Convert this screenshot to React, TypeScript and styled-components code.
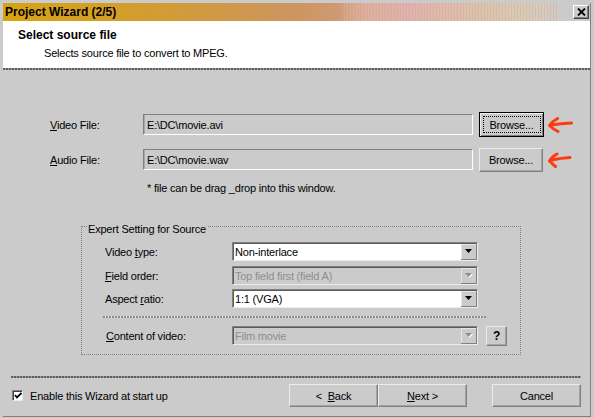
import React from "react";
import styled, { createGlobalStyle } from "styled-components";

const GlobalStyle = createGlobalStyle`
  html, body {
    margin: 0;
    padding: 0;
    background: #cbcbcb;
  }
  body {
    font-family: "Liberation Sans", Arial, sans-serif;
    font-size: 11px;
    letter-spacing: -0.2px;
    color: #000;
  }
`;

const Frame = styled.div`
  width: 587px;
  height: 413px;
  margin: 3px 0 0 3px;
  border-right: 1px solid #808080;
  border-bottom: 1px solid #808080;
  display: flex;
  flex-direction: column;
  background: #cbcbcb;
`;

const TitleBar = styled.div`
  height: 18px;
  display: flex;
  align-items: center;
  justify-content: space-between;
  padding: 0 1px 0 2px;
  background:
    repeating-linear-gradient(90deg, rgba(236, 150, 176, 0.45) 0 1px, rgba(214, 214, 140, 0.25) 1px 2px, transparent 2px 3px)
      340px 0 / 215px 100% no-repeat,
    linear-gradient(
      90deg,
      #d6a312 0%,
      #d29d30 25%,
      #cc9560 50%,
      #cf9a72 57%,
      #d9ae9a 62%,
      #dcb3ae 70%,
      #d8c2a8 79%,
      #d3cdb4 87%,
      #cfcfc0 92%,
      #cbcbcb 95%,
      #cbcbcb 100%
    );
`;

const TitleText = styled.span`
  font-weight: bold;
  font-size: 12px;
  letter-spacing: 0;
`;

const CloseButton = styled.div`
  width: 16px;
  height: 14px;
  box-sizing: border-box;
  display: flex;
  align-items: center;
  justify-content: center;
  background: #cbcbcb;
  border: 1px solid;
  border-color: #fff #404040 #404040 #fff;
  box-shadow: inset -1px -1px #808080;
`;

const Header = styled.div`
  height: 47px;
  background: #fff;
  padding: 7px 0 0 15px;
  box-sizing: border-box;
`;

const HeaderTitle = styled.div`
  font-weight: bold;
  font-size: 12px;
  letter-spacing: 0;
  line-height: 14px;
`;

const HeaderSub = styled.div`
  margin: 4px 0 0 26px;
  line-height: 14px;
`;

const DotLine = styled.div<{ $width?: number }>`
  height: 2px;
  flex-shrink: 0;
  width: ${(p) => (p.$width ? `${p.$width}px` : "auto")};
  background: repeating-linear-gradient(90deg, #5e5e5e 0 2px, #9c9c9c 2px 3px);
`;

const Body = styled.div`
  flex: 1;
  padding-top: 42px;
`;

const FileRow = styled.div`
  display: flex;
  align-items: center;
  height: 25px;
  margin-bottom: 10px;
`;

const FileLabel = styled.label`
  width: 93px;
  padding-left: 47px;
`;

const Key = styled.span`
  text-decoration: underline;
`;

const PathField = styled.div`
  width: 330px;
  height: 21px;
  box-sizing: border-box;
  display: flex;
  align-items: center;
  padding-left: 3px;
  border: 1px solid;
  border-color: #808080 #fff #fff #808080;
  box-shadow: inset 1px 0 #a8a8a8;
`;

const Button = styled.button<{ $w: number; $h: number; $focused?: boolean }>`
  width: ${(p) => p.$w}px;
  height: ${(p) => p.$h}px;
  box-sizing: border-box;
  padding: 0;
  font: inherit;
  letter-spacing: inherit;
  color: #000;
  background: #cbcbcb;
  display: flex;
  align-items: center;
  justify-content: center;
  border: 1px solid;
  border-color: ${(p) => (p.$focused ? "#000" : "#ececec #808080 #808080 #ececec")};
  box-shadow: ${(p) =>
    p.$focused ? "inset 1px 1px #ececec, inset -1px -1px #808080" : "inset -1px -1px #a4a4a4"};
`;

const FocusRing = styled.span`
  border: 1px dotted #000;
  width: 58px;
  height: 17px;
  box-sizing: border-box;
  display: flex;
  align-items: center;
  justify-content: center;
`;

const BrowseGap = styled.div`
  width: 6px;
`;

const Arrow = styled.svg`
  margin-left: 3px;
  flex-shrink: 0;
`;

const Note = styled.div`
  margin-top: -1px;
  padding-left: 144px;
  line-height: 14px;
`;

const GroupBox = styled.fieldset`
  margin: 22px 0 0 78px;
  padding: 0 0 9px 0;
  width: 440px;
  box-sizing: border-box;
  border: 1px dotted #808080;
  min-width: 0;
`;

const GroupTitle = styled.legend`
  margin-left: 5px;
  padding: 6px 1px 0 1px;
  line-height: 13px;
`;

const GroupInner = styled.div`
  padding: 6px 0 0 23px;
  display: flex;
  flex-direction: column;
`;

const SettingRow = styled.div<{ $gap?: number }>`
  display: flex;
  align-items: center;
  height: 19px;
  margin-top: ${(p) => p.$gap ?? 0}px;
`;

const SettingLabel = styled.span<{ $indent?: number }>`
  width: ${(p) => 127 - (p.$indent ?? 0)}px;
  padding-left: ${(p) => p.$indent ?? 0}px;
`;

const SelectBox = styled.div<{ $disabled?: boolean }>`
  width: 246px;
  height: 19px;
  box-sizing: border-box;
  display: flex;
  background: ${(p) => (p.$disabled ? "#cbcbcb" : "#fff")};
  color: ${(p) => (p.$disabled ? "#8e8e8e" : "#000")};
  border: 1px solid;
  border-color: #808080 #ececec #ececec #808080;
  box-shadow: inset 1px 1px #5a5a5a;
`;

const SelectValue = styled.span`
  flex: 1;
  padding-left: 2px;
  display: flex;
  align-items: center;
`;

const DropButton = styled.span`
  width: 16px;
  box-sizing: border-box;
  display: flex;
  align-items: center;
  justify-content: center;
  background: #cbcbcb;
  border-top: 1px solid #5a5a5a;
  border-right: 1px solid #808080;
  border-bottom: 1px solid #808080;
  box-shadow: inset 1px 1px #e6e6e6;
`;

const GroupSeparator = styled(DotLine)`
  margin: 8px 0 0 -2px;
  background: repeating-linear-gradient(90deg, #8a8a8a 0 2px, #e4e4e4 2px 3px);
`;

const HelpButton = styled(Button)`
  margin-left: 8px;
  font-weight: bold;
  font-size: 12px;
`;

const Footer = styled.div`
  padding: 0 9px 9px 8px;
`;

const FooterRow = styled.div`
  display: flex;
  align-items: center;
  height: 23px;
  margin-top: 6px;
`;

const CheckBox = styled.span`
  width: 11px;
  height: 11px;
  box-sizing: border-box;
  margin-left: 1px;
  background: #fff;
  border: 1px solid;
  border-color: #808080 #ececec #ececec #808080;
  box-shadow: inset 1px 1px #404040;
  display: flex;
  align-items: center;
  justify-content: center;
`;

const CheckLabel = styled.span`
  margin-left: 7px;
  flex: 1;
`;

const NavGroup = styled.div`
  display: flex;
`;

const CancelGap = styled.div`
  width: 25px;
`;

const Triangle = ({ disabled }: { disabled?: boolean }) => (
  <svg width="8" height="5" viewBox="0 0 8 5">
    {disabled && <polygon points="1,1 8,1 4.5,5" fill="#fff" />}
    <polygon points="0,0 7,0 3.5,4" fill={disabled ? "#8e8e8e" : "#000"} />
  </svg>
);

const Select = ({ value, disabled }: { value: string; disabled?: boolean }) => (
  <SelectBox $disabled={disabled}>
    <SelectValue>{value}</SelectValue>
    <DropButton>
      <Triangle disabled={disabled} />
    </DropButton>
  </SelectBox>
);

const App: React.FC = () => {
  return (
    <>
      <GlobalStyle />
      <Frame>
        <TitleBar>
          <TitleText>Project Wizard (2/5)</TitleText>
          <CloseButton>
            <svg width="9" height="8" viewBox="0 0 9 8">
              <path d="M1 0.5 L8 7.5 M8 0.5 L1 7.5" stroke="#000" strokeWidth="1.8" />
            </svg>
          </CloseButton>
        </TitleBar>
        <Header>
          <HeaderTitle>Select source file</HeaderTitle>
          <HeaderSub>Selects source file to convert to MPEG.</HeaderSub>
        </Header>
        <DotLine />
        <Body>
          <FileRow>
            <FileLabel>
              <Key>V</Key>ideo File:
            </FileLabel>
            <PathField>{"E:\\DC\\movie.avi"}</PathField>
            <BrowseGap />
            <Button $w={65} $h={25} $focused>
              <FocusRing>Browse...</FocusRing>
            </Button>
            <Arrow width="26" height="16" viewBox="0 0 26 16">
              <path
                d="M24.5 6 Q14 6.5 4 8 M10.5 1.5 Q5 4.5 2.5 8.5 Q6 12 11 14.5"
                stroke="#ff3a10"
                strokeWidth="3"
                fill="none"
                strokeLinecap="round"
                strokeLinejoin="round"
              />
            </Arrow>
          </FileRow>
          <FileRow>
            <FileLabel>
              <Key>A</Key>udio File:
            </FileLabel>
            <PathField>{"E:\\DC\\movie.wav"}</PathField>
            <BrowseGap />
            <Button $w={64} $h={24}>
              Browse...
            </Button>
            <Arrow width="26" height="16" viewBox="0 0 26 16">
              <path
                d="M24 5.5 Q15 6 6 8 M11 2 Q6 4.5 3.5 9 Q6 11.5 9.5 14.5"
                stroke="#ff3a10"
                strokeWidth="3"
                fill="none"
                strokeLinecap="round"
                strokeLinejoin="round"
              />
            </Arrow>
          </FileRow>
          <Note>* file can be drag _drop into this window.</Note>
          <GroupBox>
            <GroupTitle>Expert Setting for Source</GroupTitle>
            <GroupInner>
              <SettingRow>
                <SettingLabel>
                  Video <Key>t</Key>ype:
                </SettingLabel>
                <Select value="Non-interlace" />
              </SettingRow>
              <SettingRow $gap={5}>
                <SettingLabel>
                  <Key>F</Key>ield order:
                </SettingLabel>
                <Select value="Top field first (field A)" disabled />
              </SettingRow>
              <SettingRow $gap={4}>
                <SettingLabel>
                  Aspect <Key>r</Key>atio:
                </SettingLabel>
                <Select value="1:1 (VGA)" />
              </SettingRow>
              <GroupSeparator $width={383} />
              <SettingRow $gap={8}>
                <SettingLabel $indent={1}>
                  <Key>C</Key>ontent of video:
                </SettingLabel>
                <Select value="Film movie" disabled />
                <HelpButton $w={21} $h={20}>
                  ?
                </HelpButton>
              </SettingRow>
            </GroupInner>
          </GroupBox>
        </Body>
        <Footer>
          <DotLine />
          <FooterRow>
            <CheckBox>
              <svg width="8" height="7" viewBox="0 0 8 7">
                <path d="M1 3 L3 5.5 L7.5 1" stroke="#000" strokeWidth="1.8" fill="none" />
              </svg>
            </CheckBox>
            <CheckLabel>Enable this Wizard at start up</CheckLabel>
            <NavGroup>
              <Button $w={89} $h={23}>
                &lt;&nbsp;&nbsp;<Key>B</Key>ack
              </Button>
              <Button $w={89} $h={23}>
                <Key>N</Key>ext &gt;
              </Button>
            </NavGroup>
            <CancelGap />
            <Button $w={89} $h={23}>
              Cancel
            </Button>
          </FooterRow>
        </Footer>
      </Frame>
    </>
  );
};

export default App;
